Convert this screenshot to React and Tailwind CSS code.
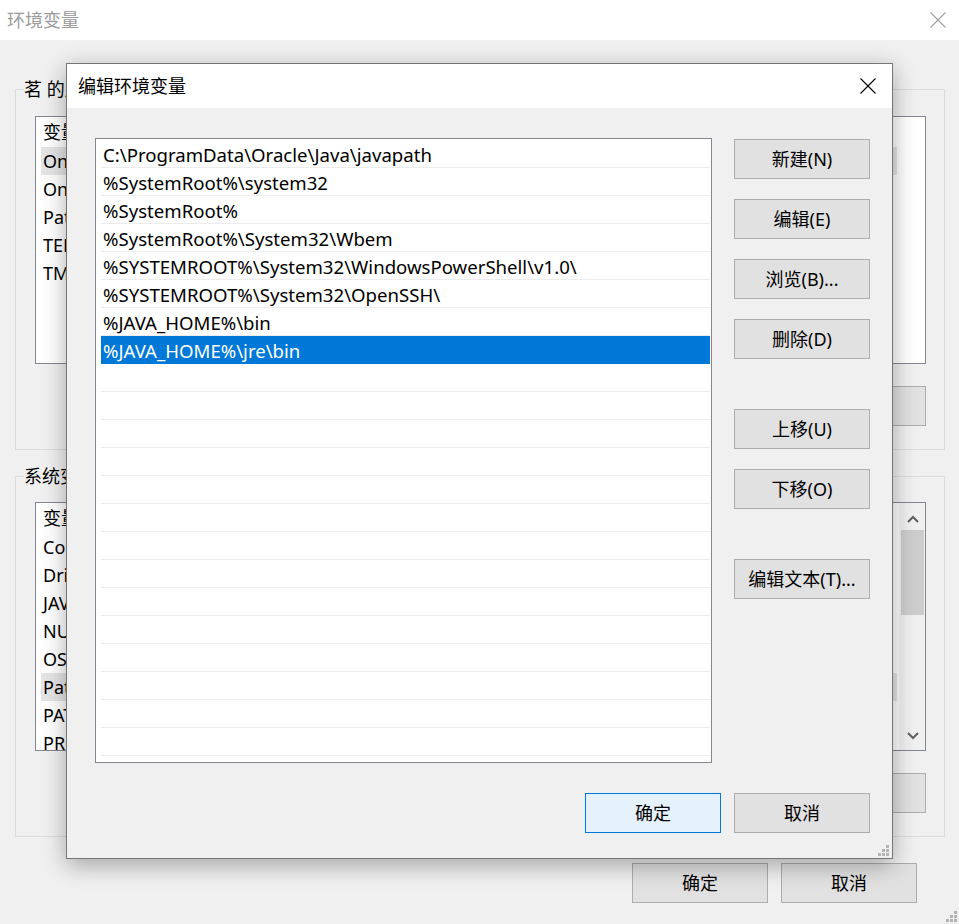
import React from "react";

const PATHS = [
  String.raw`C:\ProgramData\Oracle\Java\javapath`,
  String.raw`%SystemRoot%\system32`,
  String.raw`%SystemRoot%`,
  String.raw`%SystemRoot%\System32\Wbem`,
  String.raw`%SYSTEMROOT%\System32\WindowsPowerShell\v1.0\ `.trim(),
  String.raw`%SYSTEMROOT%\System32\OpenSSH\ `.trim(),
  String.raw`%JAVA_HOME%\bin`,
  String.raw`%JAVA_HOME%\jre\bin`,
];

const USER_VARS = ["OneDrive", "OneDriveConsumer", "Path", "TEMP", "TMP"];
const SYS_VARS = ["ComSpec", "DriverData", "JAVA_HOME", "NUMBER_OF_PROCESSORS", "OS", "Path", "PATHEXT", "PROCESSOR_ARCHITECTURE"];

function CloseIcon({ className = "", color = "#000" }) {
  return (
    <svg width="16" height="16" viewBox="0 0 16 16" className={className}>
      <path d="M0.5 0.5L15.5 15.5M15.5 0.5L0.5 15.5" stroke={color} strokeWidth="1.1" fill="none" />
    </svg>
  );
}

function Grip() {
  return (
    <svg width="12" height="12" viewBox="0 0 12 12">
      {[[8, 0], [4, 4], [8, 4], [0, 8], [4, 8], [8, 8]].map(([x, y]) => (
        <rect key={`${x}-${y}`} x={x} y={y} width="3" height="3" fill="#b4b4b4" />
      ))}
    </svg>
  );
}

function WinButton({ children, primary = false, className = "" }) {
  return (
    <button
      className={`h-10 w-[136px] border text-[18px] leading-none flex items-center justify-center ${
        primary ? "border-[#0078d7] bg-[#e5f1fb]" : "border-[#adadad] bg-[#e1e1e1]"
      } ${className}`}
    >
      {children}
    </button>
  );
}

// list view of the dialog behind (mostly covered)
function VarList({ items, selected, scroll = false, height }) {
  return (
    <div className={`ml-[11px] w-[891px] ${height} border border-[#828790] bg-white flex overflow-hidden`}>
      <div className="flex-1 min-w-0">
        <div className="h-[30px] flex">
          <div className="w-[856px] flex items-center pl-[7px] text-[18px] border-r border-[#e5e5e5]">变量</div>
        </div>
        {items.map((v, i) => (
          <div key={v} className="h-7 pl-[5px] flex">
            <div className={`w-[856px] flex items-center pl-[2px] text-[18px] whitespace-nowrap ${i === selected ? "bg-[#e5e5e5]" : ""}`}>
              {v}
            </div>
          </div>
        ))}
      </div>
      {scroll && (
        <div className="w-[26px] bg-[#f0f0f0] border-l border-[#f7f7f7] flex flex-col items-center">
          <svg width="12" height="8" viewBox="0 0 12 8" className="mt-[12px]">
            <path d="M1 7L6 2L11 7" stroke="#606060" strokeWidth="2" fill="none" />
          </svg>
          <div className="mt-[7px] w-[23px] h-[85px] bg-[#cdcdcd]" />
          <div className="flex-1" />
          <svg width="12" height="8" viewBox="0 0 12 8" className="mb-[10px]">
            <path d="M1 1L6 6L11 1" stroke="#606060" strokeWidth="2" fill="none" />
          </svg>
        </div>
      )}
    </div>
  );
}

function Group({ title, children, className = "" }) {
  return (
    <fieldset className={`w-[930px] h-[373px] border border-[#dcdcdc] px-[8px] ${className}`}>
      <legend className="text-[18px] leading-6 whitespace-nowrap">{title}</legend>
      {children}
    </fieldset>
  );
}

function GroupButtons() {
  return (
    <div className="mt-[22px] flex justify-end gap-[13px] pr-[10px]">
      <WinButton>新建(W)...</WinButton>
      <WinButton>编辑(I)...</WinButton>
      <WinButton>删除(L)</WinButton>
    </div>
  );
}

export default function App() {
  return (
    <div className="relative w-[959px] h-[924px] overflow-hidden bg-[#f0f0f0] text-black font-['Noto_Sans','Noto_Sans_CJK_SC',sans-serif]">
      {/* 环境变量 window (inactive, behind) */}
      <div className="flex flex-col h-full">
        <div className="h-10 bg-white flex items-center justify-between pl-[7px] pr-[13px]">
          <span className="text-[18px] text-[#9b9b9b]">环境变量</span>
          <CloseIcon color="#a0a0a0" />
        </div>
        <div className="flex-1 flex flex-col pl-[15px] pt-[37px] relative">
          <Group title="茗 的用户变量">
            <div className="mt-[15px]">
              <VarList items={USER_VARS} selected={0} height="h-[248px]" />
            </div>
            <GroupButtons />
          </Group>
          <Group title="系统变量" className="mt-[14px]">
            <div className="mt-[14px]">
              <VarList items={SYS_VARS} selected={5} scroll height="h-[249px]" />
            </div>
            <GroupButtons />
          </Group>
          <div className="mt-[26px] flex justify-end gap-[13px] pr-[42px]">
            <WinButton>确定</WinButton>
            <WinButton>取消</WinButton>
          </div>
          <div className="absolute right-[1px] bottom-[1px]">
            <Grip />
          </div>
        </div>
      </div>

      {/* 编辑环境变量 dialog */}
      <div className="absolute left-[66px] top-[63px] w-[827px] h-[796px] border border-[#767676] bg-[#f0f0f0] flex flex-col shadow-[0_6px_22px_rgba(0,0,0,0.32)]">
        <div className="h-11 bg-white flex items-center justify-between pl-[11px] pr-[16px]">
          <span className="text-[18px]">编辑环境变量</span>
          <CloseIcon />
        </div>
        <div className="flex-1 flex flex-col pt-[30px] relative">
          <div className="flex pl-[28px] pr-[22px] gap-[22px]">
            <div className="w-[617px] h-[625px] border border-[#828790] bg-white overflow-hidden pt-[1px] pl-[5px] pr-[1px]">
              {PATHS.map((p, i) => (
                <div
                  key={p}
                  className={`h-7 border-b flex items-center pl-[2px] pt-[2px] text-[18.6px] whitespace-nowrap ${
                    i === 7 ? "bg-[#0078d7] border-[#0078d7] text-white" : "border-[#ececec]"
                  }`}
                >
                  {p}
                </div>
              ))}
              {Array.from({ length: 16 }).map((_, i) => (
                <div key={`e${i}`} className="h-7 border-b border-[#ececec]" />
              ))}
            </div>
            <div className="flex flex-col pt-[1px]">
              <WinButton>新建(N)</WinButton>
              <WinButton className="mt-5">编辑(E)</WinButton>
              <WinButton className="mt-5">浏览(B)...</WinButton>
              <WinButton className="mt-5">删除(D)</WinButton>
              <WinButton className="mt-[50px]">上移(U)</WinButton>
              <WinButton className="mt-5">下移(O)</WinButton>
              <WinButton className="mt-[50px]">编辑文本(T)...</WinButton>
            </div>
          </div>
          <div className="mt-[30px] flex justify-end gap-[13px] pr-[22px]">
            <WinButton primary>确定</WinButton>
            <WinButton>取消</WinButton>
          </div>
          <div className="absolute right-[2px] bottom-[1px]">
            <Grip />
          </div>
        </div>
      </div>
    </div>
  );
}
